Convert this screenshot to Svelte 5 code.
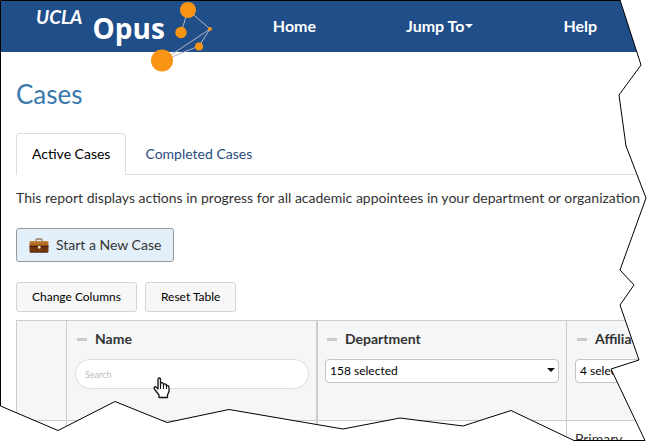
<script lang="ts">
    let activeTab = $state('active');
    let search = $state('');

    const tabs = [
        { id: 'active', label: 'Active Cases' },
        { id: 'completed', label: 'Completed Cases' }
    ];

    // The torn edge, clockwise from the top right corner
    const tear = '620,0 641,65 619,95 626,146 646,198 620,270 634,285 620,305 639,360 611,369 645,440.5 574,440.5 511,410.5 463,426 400,418 343,429 229,409.5 167,422.5 115,401.5 58,430.5 0.5,406 0.5,0.5 620,0.5';
</script>

<div class="page">
    <header class="navbar">
        <a class="brand" href="#home">
            <span class="brand-ucla">UCLA</span>
            <span class="brand-opus">Opus</span>
        </a>
        <svg class="network" viewBox="0 0 64 72" aria-hidden="true">
            <path d="M38 9 31 32M38 9 60 28 49 45 12 60 60 28" fill="none" stroke="#b4bac4" />
            <g fill="#f99414">
                <circle cx="38" cy="9" r="8" />
                <circle cx="31" cy="31.500" r="5.700" />
                <circle cx="60" cy="28" r="1.900" />
                <circle cx="49" cy="45.500" r="4" />
                <circle cx="12" cy="59.500" r="11" />
            </g>
        </svg>
        <nav class="menu">
            <a href="#home">Home</a>
            <a href="#jump">Jump To<span class="caret"></span></a>
            <a href="#help">Help</a>
        </nav>
    </header>

    <main class="content">
        <h1>Cases</h1>

        <div class="tabs" role="tablist">
            {#each tabs as tab}
                <button
                    class="tab"
                    class:active={tab.id === activeTab}
                    role="tab"
                    aria-selected={tab.id === activeTab}
                    onclick={() => (activeTab = tab.id)}
                >{tab.label}</button>
            {/each}
        </div>

        <p class="intro">This report displays actions in progress for all academic appointees in your department or organization</p>

        <button class="new-case">
            <svg width="20" height="15" viewBox="0 0 20 15" aria-hidden="true">
                <defs>
                    <linearGradient id="leather" x2="0" y2="1">
                        <stop offset="0" stop-color="#c98a3c" />
                        <stop offset="0.35" stop-color="#a5601f" />
                        <stop offset="0.5" stop-color="#6b2f0c" />
                        <stop offset="1" stop-color="#824013" />
                    </linearGradient>
                </defs>
                <path d="M7 3V2Q7 1 8 1h4q1 0 1 1v1" fill="none" stroke="#94836f" stroke-width="1.300" />
                <rect x="0.500" y="3" width="19" height="11.500" rx="1.200" fill="url(#leather)" />
                <path d="M0.500 8.500h19M1 14h18" stroke="#4d1f08" />
                <rect x="9" y="8" width="2.500" height="2.500" rx="0.500" fill="#f0e5d5" />
            </svg>
            <span>Start a New Case</span>
        </button>

        <div class="toolbar">
            <button class="small">Change Columns</button>
            <button class="small">Reset Table</button>
        </div>

        <table class="cases">
            <colgroup>
                <col class="col-actions" />
                <col class="col-filter" />
                <col class="col-filter" />
                <col class="col-filter" />
            </colgroup>
            <thead>
                <tr>
                    <th></th>
                    <th>
                        <label class="heading" for="name">Name</label>
                        <input id="name" type="text" placeholder="Search" bind:value={search} />
                    </th>
                    <th class="divider">
                        <label class="heading" for="department">Department</label>
                        <span class="select">
                            <select id="department"><option>158 selected</option></select>
                        </span>
                    </th>
                    <th>
                        <label class="heading" for="affiliation">Affiliation</label>
                        <span class="select">
                            <select id="affiliation"><option>4 selected</option></select>
                        </span>
                    </th>
                </tr>
            </thead>
            <tbody>
                <tr>
                    <td></td>
                    <td></td>
                    <td class="divider"></td>
                    <td>Primary</td>
                </tr>
            </tbody>
        </table>
    </main>

    <svg class="tear" viewBox="0 0 666 441" preserveAspectRatio="none" aria-hidden="true">
        <path d="M-1 -1H667V442H-1Z M{tear}Z" fill="#fff" fill-rule="evenodd" />
        <polygon points={tear} fill="none" stroke="#000" vector-effect="non-scaling-stroke" />
    </svg>

    <svg class="pointer" viewBox="0 0 18 22" aria-hidden="true">
        <path
            d="M5 12V2.500Q5 1 6.300 1 7.500 1 7.500 2.500V8.500 6.500Q7.700 5.500 9 5.700 10.500 6 10.500 7.500V9 7.500Q11 6.600 12.200 7 13.500 7.300 13.500 8.800V10 9Q14.300 8 15.300 8.800 16 9.500 16 10.500V14.500L14.500 18V20.500H6V18L2.500 13.500Q.500 11 1.500 10 3 9 5 12Z"
            fill="#fff"
            stroke="#111"
            stroke-width="1.300"
            stroke-linejoin="round"
        />
        <path d="M7.500 8v4M10.500 9v3M13.500 10v2" stroke="#111" />
    </svg>
</div>

<style>
    :global(body) {
        margin: 0;
        background: #fff;
    }

    .page {
        position: relative;
        height: 100vh;
        overflow: hidden;
        box-sizing: border-box;
        color: #333;
        font-family: Lato, sans-serif;
        font-size: 14px;
        line-height: 20px;
    }

    button,
    input,
    select {
        font: inherit;
        box-sizing: border-box;
    }

    .navbar {
        display: flex;
        height: 52px;
        background: #1f4e89;
    }

    .brand {
        display: flex;
        align-items: flex-start;
        gap: 10px;
        padding-left: 36px;
        color: #fff;
        text-decoration: none;
    }

    .brand-ucla {
        padding-top: 7px;
        font-size: 19px;
        font-style: italic;
        font-weight: 700;
    }

    .brand-opus {
        padding-top: 10px;
        font-family: "Open Sans", sans-serif;
        font-size: 28px;
        font-weight: 700;
        line-height: 36px;
    }

    .network {
        position: absolute;
        left: 150px;
        top: 1px;
        width: 64px;
        height: 72px;
    }

    .menu {
        display: flex;
        align-items: center;
        gap: 90px;
        margin-left: 108px;
    }

    .menu a {
        display: flex;
        align-items: center;
        color: #fff;
        font-size: 16px;
        font-weight: 700;
        text-decoration: none;
        white-space: nowrap;
    }

    .caret {
        margin-left: 1px;
        border: 4px solid transparent;
        border-top-color: #fff;
        border-bottom: 0;
    }

    .content {
        padding: 27px 0 0 16px;
    }

    h1 {
        margin: 0 0 24px;
        color: #3a78ad;
        font-size: 26px;
        font-weight: 400;
        line-height: 30px;
    }

    .tabs {
        display: flex;
        border-bottom: 1px solid #ddd;
    }

    .tab {
        height: 41px;
        margin-right: 3px;
        padding: 0 15px;
        border: 1px solid transparent;
        border-radius: 4px 4px 0 0;
        background: none;
        color: #2a4a80;
        cursor: pointer;
    }

    .tab.active {
        height: 42px;
        margin-bottom: -1px;
        padding-bottom: 2px;
        border-color: #ddd;
        border-bottom: 0;
        background: #fff;
        color: #000;
    }

    .intro {
        margin: 13px 0 20px;
        white-space: nowrap;
    }

    .new-case {
        display: flex;
        align-items: center;
        gap: 7px;
        height: 34px;
        padding: 0 12px;
        border: 1px solid #999;
        border-radius: 3px;
        background: #e3eff9;
        color: #333;
        cursor: pointer;
    }

    .toolbar {
        display: flex;
        gap: 8px;
        margin: 20px 0 8px;
    }

    .small {
        height: 30px;
        padding: 0 15px;
        border: 1px solid #d5d5d5;
        border-radius: 3px;
        background: #f7f7f7;
        color: #000;
        font-size: 12px;
        cursor: pointer;
    }

    .cases {
        width: 800px;
        border-collapse: separate;
        border-spacing: 0;
        border-top: 1px solid #ccc;
        table-layout: fixed;
    }

    .col-actions {
        width: 50px;
    }

    .cases th,
    .cases td {
        box-sizing: border-box;
        padding: 8px 7px 8px 8px;
        border-left: 1px solid #ccc;
        text-align: left;
        vertical-align: top;
    }

    .cases th {
        height: 100px;
        border-bottom: 1px solid #ccc;
        background: #f5f6f8;
        font-weight: 400;
    }

    .cases .divider {
        padding-left: 7px;
        border-left-width: 2px;
    }

    .heading {
        display: flex;
        align-items: center;
        gap: 8px;
        margin-bottom: 10px;
        padding-left: 2px;
        font-weight: 700;
    }

    .heading::before {
        content: "";
        width: 10px;
        height: 3px;
        background: #c8c9cb;
    }

    .cases input {
        display: block;
        width: 100%;
        height: 30px;
        padding: 0 9px;
        border: 1px solid #ddd;
        border-radius: 15px;
        background: #fff;
        font-size: 9px;
    }

    .cases input::placeholder {
        color: #bbb;
    }

    .select {
        position: relative;
        display: block;
    }

    .select::after {
        content: "";
        position: absolute;
        right: 4px;
        top: 9px;
        border: 4px solid transparent;
        border-top-color: #111;
        border-bottom: 0;
    }

    .select select {
        display: block;
        width: 100%;
        height: 24px;
        padding: 0 4px;
        border: 1px solid #c4c4c4;
        border-radius: 4px;
        background: #fff;
        color: #000;
        font-size: 12px;
        appearance: none;
    }

    .tear {
        position: absolute;
        inset: 0;
        width: 100%;
        height: 100%;
        pointer-events: none;
    }

    .pointer {
        position: absolute;
        left: 153px;
        top: 377px;
        width: 18px;
        height: 22px;
        pointer-events: none;
    }
</style>
